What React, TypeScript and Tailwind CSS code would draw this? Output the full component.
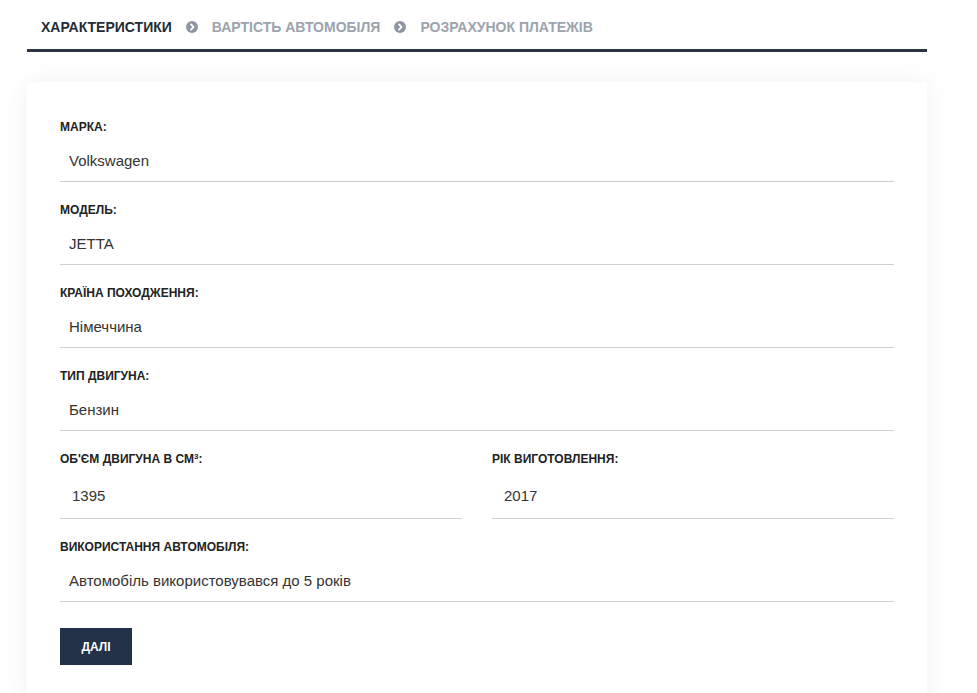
import React from 'react';

const STEPS = ['Характеристики', 'Вартість автомобіля', 'Розрахунок платежів'];

function StepArrow() {
  return (
    <svg width="12" height="12" viewBox="0 0 12 12" className="mx-[14px] shrink-0">
      <circle cx="6" cy="6" r="6" fill="#8b96a2" />
      <path d="M5 3.4 L7.6 6 L5 8.6" fill="none" stroke="#fff" strokeWidth="1.8" strokeLinecap="round" strokeLinejoin="round" />
    </svg>
  );
}

function Field({ label, value, tall }: { label: React.ReactNode; value: string; tall?: boolean }) {
  return (
    <div className="mb-[21px]">
      <div className="text-[12px] leading-[14px] font-bold uppercase text-[#222] mb-[7px]">{label}</div>
      <div
        className={`flex items-center border-b border-[#cfcfcf] text-[15px] text-[#333] ${tall ? 'h-[46px] pl-[12px] pt-[1px]' : 'h-[41px] pl-[9px]'}`}
      >
        {value}
      </div>
    </div>
  );
}

export default function App() {
  return (
    <div className="min-h-[693px] bg-white px-[27px] w-[954px]" style={{ fontFamily: '"Liberation Sans", Arial, sans-serif' }}>
      <div className="flex items-center pl-[14px] pt-[18px] pb-[13px] border-b-[3px] border-[#2b3640]">
        {STEPS.map((s, i) => (
          <React.Fragment key={s}>
            {i > 0 && <StepArrow />}
            <span className={`text-[14px] leading-[18px] font-bold uppercase ${i === 0 ? 'text-[#222b36]' : 'text-[#9ba3ad]'}`}>
              {s}
            </span>
          </React.Fragment>
        ))}
      </div>

      <div className="mt-[30px] bg-white shadow-[0_0_24px_rgba(0,0,0,0.06)] px-[33px] pt-[38px] pb-[40px]">
        <Field label="Марка:" value="Volkswagen" />
        <Field label="Модель:" value="JETTA" />
        <Field label="Країна походження:" value="Німеччина" />
        <Field label="Тип двигуна:" value="Бензин" />
        <div className="grid grid-cols-2 gap-x-[30px]">
          <Field label={<>Об'єм двигуна в см<sup className="text-[8px]">3</sup>:</>} value="1395" tall />
          <Field label="Рік виготовлення:" value="2017" tall />
        </div>
        <Field label="Використання автомобіля:" value="Автомобіль використовувався до 5 років" />
        <button className="mt-[5px] h-[37px] w-[72px] bg-[#243249] text-white text-[12px] font-bold uppercase">
          Далі
        </button>
      </div>
    </div>
  );
}
